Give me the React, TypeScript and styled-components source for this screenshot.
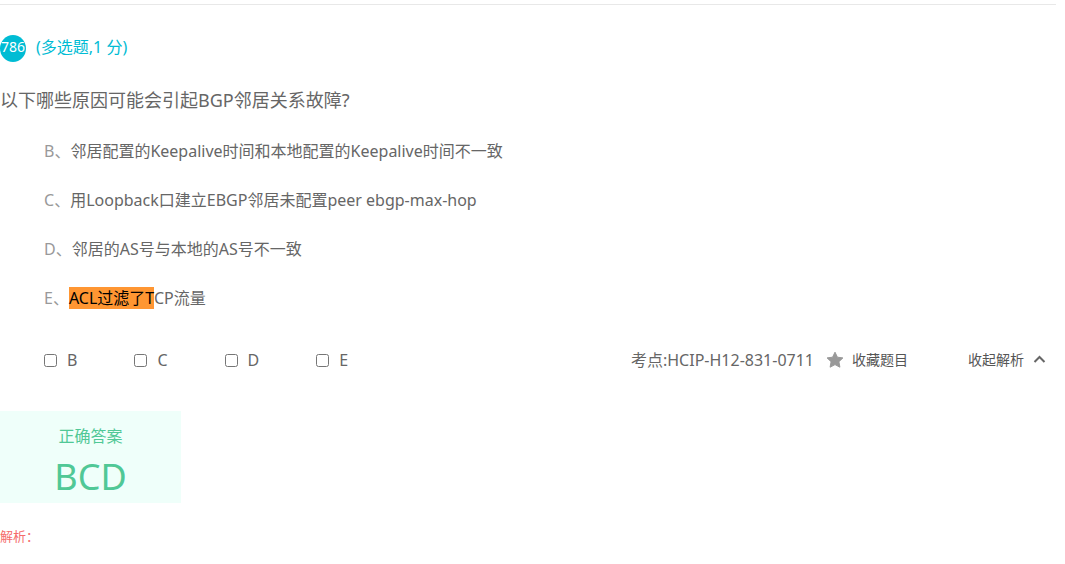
import React from "react";
import styled, { createGlobalStyle } from "styled-components";

const GlobalStyle = createGlobalStyle`
  * { box-sizing: border-box; }
  body {
    margin: 0;
    background: #fff;
    color: #666;
    font: 16px/24px "Noto Sans", "Noto Sans CJK SC", sans-serif;
  }
`;

const Page = styled.main`
  padding-top: 4px;
`;

const Divider = styled.hr`
  margin: 0 9px 0 0;
  border: 0;
  border-top: 1px solid #e8e8e8;
`;

const Heading = styled.header`
  display: flex;
  align-items: flex-start;
  gap: 10px;
  margin-top: 30px;
  color: #00bcd4;
`;

const NumberBadge = styled.span`
  display: flex;
  justify-content: center;
  width: 26px;
  height: 27px;
  border-radius: 50%;
  background: #00bcd4;
  color: #fff;
  font-size: 14px;
`;

const Question = styled.h1`
  margin: 24px 0 0;
  font-size: 18px;
  font-weight: 400;
  line-height: 28px;
`;

const Options = styled.ul`
  display: flex;
  flex-direction: column;
  gap: 25px;
  margin: 25px 0 0;
  padding: 0 0 0 44px;
  list-style: none;
`;

const Option = styled.li`
  display: flex;
`;

const Letter = styled.span`
  white-space: nowrap;
  color: #999;
`;

const Highlight = styled.mark`
  background: #ff9632;
  color: #000;
`;

const AnswerBar = styled.div`
  display: flex;
  align-items: center;
  justify-content: space-between;
  margin-top: 38px;
  padding: 0 19px 0 44px;
`;

const Choices = styled.div`
  display: flex;
  gap: 57px;
`;

const Choice = styled.label`
  display: flex;
  align-items: center;
  gap: 10px;
`;

const Checkbox = styled.input`
  width: 13px;
  height: 13px;
  margin: 0;
`;

const Tools = styled.div`
  display: flex;
  align-items: center;
`;

const ToolButton = styled.button<{ $spaced?: boolean }>`
  display: flex;
  align-items: center;
  gap: 8px;
  margin-left: ${(p) => (p.$spaced ? "60px" : "12px")};
  padding: 0;
  border: 0;
  background: none;
  color: #555;
  font: inherit;
  font-size: 14px;
  cursor: pointer;
`;

const Answer = styled.section`
  display: flex;
  flex-direction: column;
  align-items: center;
  gap: 2px;
  width: 181px;
  margin-top: 39px;
  padding-top: 13px;
  background: #effffa;
  color: #50c896;
`;

const AnswerValue = styled.strong`
  font-size: 36px;
  font-weight: 400;
  line-height: 53px;
`;

const Analysis = styled.p`
  margin: 21px 0 0;
  color: #f56c6c;
  font-size: 13px;
`;

const options = [
  { letter: "B", text: "邻居配置的Keepalive时间和本地配置的Keepalive时间不一致" },
  { letter: "C", text: "用Loopback口建立EBGP邻居未配置peer ebgp-max-hop" },
  { letter: "D", text: "邻居的AS号与本地的AS号不一致" },
  { letter: "E", marked: "ACL过滤了T", text: "CP流量" },
];

export default function App() {
  return (
    <Page lang="zh-CN">
      <GlobalStyle />
      <Divider />
      <Heading>
        <NumberBadge>786</NumberBadge>
        <span>(多选题,1 分)</span>
      </Heading>
      <Question>以下哪些原因可能会引起BGP邻居关系故障?</Question>
      <Options>
        {options.map((o) => (
          <Option key={o.letter}>
            <Letter>{o.letter}、</Letter>
            <span>
              {o.marked && <Highlight>{o.marked}</Highlight>}
              {o.text}
            </span>
          </Option>
        ))}
      </Options>
      <AnswerBar>
        <Choices>
          {options.map((o) => (
            <Choice key={o.letter}>
              <Checkbox type="checkbox" />
              {o.letter}
            </Choice>
          ))}
        </Choices>
        <Tools>
          <span>考点:HCIP-H12-831-0711</span>
          <ToolButton type="button">
            <svg width="18" height="18" viewBox="0 0 18 18" aria-hidden="true">
              <path
                d="M9 1.2l2.4 5 5.5.7-4 3.8 1 5.5L9 13.6l-4.9 2.6 1-5.5-4-3.8 5.5-.7z"
                fill="#999"
                stroke="#999"
                strokeWidth="1"
                strokeLinejoin="round"
              />
            </svg>
            收藏题目
          </ToolButton>
          <ToolButton type="button" $spaced>
            收起解析
            <svg width="14" height="14" viewBox="0 0 14 14" aria-hidden="true">
              <path d="M2.5 9L7.5 4l5 5" fill="none" stroke="#666" strokeWidth="2" />
            </svg>
          </ToolButton>
        </Tools>
      </AnswerBar>
      <Answer>
        <span>正确答案</span>
        <AnswerValue>BCD</AnswerValue>
      </Answer>
      <Analysis>解析：</Analysis>
    </Page>
  );
}
